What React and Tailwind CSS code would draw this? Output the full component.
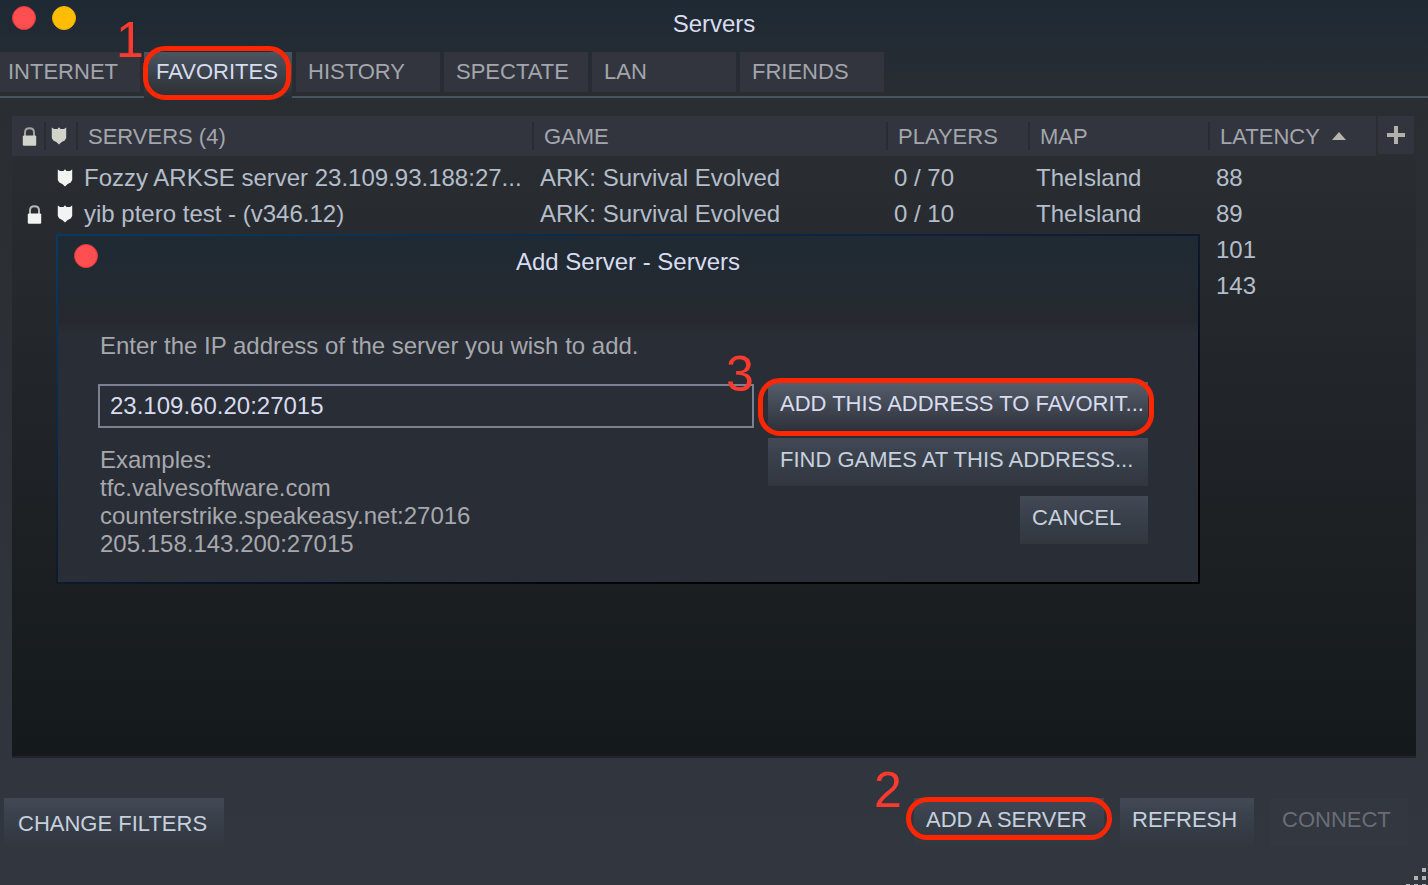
import { useState } from 'react';

const tabs = ['HISTORY', 'SPECTATE', 'LAN', 'FRIENDS'];

const servers = [
  { locked: false, secure: true, name: 'Fozzy ARKSE server 23.109.93.188:27...', game: 'ARK: Survival Evolved', players: '0 / 70', map: 'TheIsland', latency: 88 },
  { locked: true, secure: true, name: 'yib ptero test - (v346.12)', game: 'ARK: Survival Evolved', players: '0 / 10', map: 'TheIsland', latency: 89 },
  { latency: 101 },
  { latency: 143 },
];

const buttonBase = 'h-12 px-3 pb-1 text-left text-[22px] leading-7 whitespace-nowrap';
const buttonNormal = 'bg-linear-to-b from-[#434855] via-[#383f49] to-[#32363f] text-[#c6d0de]';

function LockIcon() {
  return (
    <svg width="15" height="19" viewBox="0 0 15 19" fill="none" aria-hidden="true">
      <path d="M3 10V5.500C3 2.500 5 1.200 7.500 1.200S12 2.500 12 5.500V10" stroke="currentColor" strokeWidth="2" opacity="0.7" />
      <path d="M1.500 8.500h12l0.700 1v8.500l-0.700 0.700h-12l-0.700-0.700v-8.500z" fill="currentColor" />
    </svg>
  );
}

function ShieldIcon() {
  return (
    <svg width="16" height="18" viewBox="0 0 16 18" fill="currentColor" aria-hidden="true">
      <path d="M0.800 0.500L3 2h3.500L8 0.300 9.500 2H13l2.200-1.500V11l-1.500 2.500-3 1.500L8 17.500 5.300 15l-3-1.500L0.800 11z" />
    </svg>
  );
}

function Dot({ label, color }) {
  return <button type="button" aria-label={label} className={`size-6 rounded-full border ${color}`} />;
}

function HeadCell({ children }) {
  return (
    <th scope="col" className="relative bg-[#32353e] p-0 pl-3 text-left font-normal">
      <span className="absolute top-1.5 left-0 h-7 w-0.5 bg-[#292c34]" />
      {children}
    </th>
  );
}

function ServerTable() {
  return (
    <table className="w-full table-fixed border-collapse whitespace-nowrap">
      <colgroup>
        <col className="w-8" />
        <col className="w-8" />
        <col className="w-[456px]" />
        <col />
        <col className="w-[142px]" />
        <col className="w-[180px]" />
        <col className="w-[168px]" />
        <col className="w-10" />
      </colgroup>
      <thead className="text-[22px] text-[#a3a6ac]">
        <tr className="h-10">
          <th scope="col" aria-label="Password" className="bg-[#32353e] p-0 pl-2.5 text-[#d0d4ca]">
            <LockIcon />
          </th>
          <th scope="col" aria-label="Secure" className="relative bg-[#32353e] p-0 pl-[7px] text-[#d0d4ca]">
            <span className="absolute top-1.5 left-0 h-7 w-0.5 bg-[#292c34]" />
            <ShieldIcon />
          </th>
          <HeadCell>SERVERS (4)</HeadCell>
          <HeadCell>GAME</HeadCell>
          <HeadCell>PLAYERS</HeadCell>
          <HeadCell>MAP</HeadCell>
          <HeadCell>
            <span className="flex items-center gap-3">
              LATENCY
              <svg width="14" height="8" viewBox="0 0 14 8" fill="#b8b5ae" aria-hidden="true">
                <path d="M7 0l7 8H0z" />
              </svg>
            </span>
          </HeadCell>
          <th scope="col" className="p-0 pl-0.5 align-top">
            <button type="button" aria-label="Add column" className="flex h-[38px] w-9 items-center justify-center bg-[#32353e]">
              <svg width="18" height="18" viewBox="0 0 18 18" stroke="#b3b1ac" strokeWidth="4" aria-hidden="true">
                <path d="M9 0v18M0 9h18" />
              </svg>
            </button>
          </th>
        </tr>
      </thead>
      <tbody className="text-2xl/7 text-[#b4bdc9] before:block before:h-1 before:content-['']">
        {servers.map((server) => (
          <tr key={server.latency} className="h-9">
            <td className="p-0 pl-[15px] text-[#f2f4f3]">{server.locked && <LockIcon />}</td>
            <td className="p-0 pl-[13px] text-[#f2f4f3]">{server.secure && <ShieldIcon />}</td>
            <td className="p-0 pl-2">{server.name}</td>
            <td className="p-0 pl-2">{server.game}</td>
            <td className="p-0 pl-2">{server.players}</td>
            <td className="p-0 pl-2">{server.map}</td>
            <td className="p-0 pl-2">{server.latency}</td>
            <td className="p-0" />
          </tr>
        ))}
      </tbody>
    </table>
  );
}

function AddServerDialog() {
  const [address, setAddress] = useState('23.109.60.20:27015');

  return (
    <section
      role="dialog"
      aria-labelledby="dialog-title"
      className="absolute top-[118px] right-[216px] left-11 bg-linear-to-br from-[#0b3a60] via-[#0d1a2e] to-black p-0.5"
    >
      <div className="bg-[#292d35] bg-linear-to-b from-[#1f2a34] via-[#25292f] via-[84px] to-[#292d35] to-[100px] pb-6">
        <header className="grid h-24 grid-cols-[1fr_auto_1fr] items-start px-4 pt-2">
          <Dot label="Close dialog" color="border-[#e8383a] bg-[#ff4f50]" />
          <h2 id="dialog-title" className="mt-1 text-2xl/7 text-[#d8dcf0]">Add Server - Servers</h2>
        </header>
        <form className="pr-[50px] pl-10 text-2xl/7 text-[#a6a8ad]" onSubmit={(e) => e.preventDefault()}>
          <label htmlFor="address" className="block pl-0.5">Enter the IP address of the server you wish to add.</label>
          <div className="flex items-start gap-3.5 pt-[22px]">
            <div className="min-w-0 flex-1 pt-0.5">
              <input
                id="address"
                type="text"
                value={address}
                onChange={(e) => setAddress(e.target.value)}
                className="block h-11 w-full border-2 border-[#7b8193] bg-[#292d35] px-2.5 text-[#d8dcf0] outline-none"
              />
              <p className="pt-[18px] pl-0.5">
                Examples:
                <br />
                tfc.valvesoftware.com
                <br />
                counterstrike.speakeasy.net:27016
                <br />
                205.158.143.200:27015
              </p>
            </div>
            <div className="flex w-[380px] flex-col items-end gap-2.5">
              <div className="flex w-full flex-col gap-2">
                <div className="relative">
                  <button type="submit" className={`${buttonBase} w-full bg-linear-to-b from-[#565f6c] to-[#2f323b] text-[#d8dcf0]`}>
                    ADD THIS ADDRESS TO FAVORIT...
                  </button>
                  <span className="pointer-events-none absolute -top-1 -right-1.5 -bottom-1.5 -left-2.5 rounded-[22px] border-5 border-[#ff2600]" />
                  <span className="absolute -top-9 -left-[42px] text-[50px]/[56px] text-[#ff3b30]">3</span>
                </div>
                <button type="button" className={`${buttonBase} ${buttonNormal} w-full`}>
                  FIND GAMES AT THIS ADDRESS...
                </button>
              </div>
              <button type="button" className={`${buttonBase} ${buttonNormal} w-32`}>CANCEL</button>
            </div>
          </div>
        </form>
      </div>
    </section>
  );
}

export default function App() {
  return (
    <main className="relative flex min-h-screen flex-col bg-linear-to-b from-[#1e2934] via-[#2a2e32] via-[110px] to-[#32363f] font-['Liberation_Sans',Arial,sans-serif]">
      <header className="grid h-[52px] grid-cols-[1fr_auto_1fr] items-start px-3 pt-1.5">
        <div className="flex gap-4">
          <Dot label="Close" color="border-[#e8383a] bg-[#ff4f50]" />
          <Dot label="Minimize" color="border-[#f0b000] bg-[#ffbd00]" />
        </div>
        <h1 className="mt-1 text-2xl/7 text-[#d8dcf0]">Servers</h1>
      </header>

      <nav className="flex h-[46px] items-start gap-1 border-b-2 border-[#4a545e] text-[22px]/10 text-[#a3a6ac]">
        <button type="button" className="h-10 w-[140px] bg-[#32353e] pl-2 text-left">INTERNET</button>
        <div className="relative">
          <button type="button" className="block h-[46px] w-[148px] bg-linear-to-b from-[#4b5560] to-[#2b2e34] pb-1.5 pl-3 text-left text-[#d8dcf0]">
            FAVORITES
          </button>
          <span className="pointer-events-none absolute -top-1.5 right-px -bottom-0.5 -left-px rounded-[22px] border-5 border-[#ff2600]" />
          <span className="absolute -top-10 -left-7 text-[50px]/[56px] text-[#ff3b30]">1</span>
        </div>
        {tabs.map((tab) => (
          <button key={tab} type="button" className="h-10 w-36 bg-[#32353e] pl-3 text-left">{tab}</button>
        ))}
      </nav>

      <div className="relative mx-3 mt-[18px] min-h-[641px] flex-1 border-b-2 border-[#20232c] bg-linear-to-b from-[#2b2f34] to-[#14191b]">
        <ServerTable />
        <AddServerDialog />
      </div>

      <footer className="flex h-[127px] items-start justify-between pt-10 pr-5 pl-1">
        <button type="button" className={`h-12 w-[220px] pt-1 pl-3.5 text-left text-[22px] leading-7 ${buttonNormal}`}>
          CHANGE FILTERS
        </button>
        <div className="flex gap-4">
          <div className="relative">
            <button type="button" className={`${buttonBase} ${buttonNormal} w-[190px]`}>ADD A SERVER</button>
            <span className="pointer-events-none absolute -inset-x-2 -top-px bottom-1.5 rounded-[22px] border-5 border-[#ff2600]" />
            <span className="absolute -top-9 -left-10 text-[50px]/[56px] text-[#ff3b30]">2</span>
          </div>
          <button type="button" className={`${buttonBase} ${buttonNormal} w-[134px]`}>REFRESH</button>
          <button type="button" disabled className={`${buttonBase} w-[138px] bg-[#33373f] text-[#6a6d76]`}>CONNECT</button>
        </div>
      </footer>

      <svg className="absolute right-0 bottom-0" width="24" height="18" viewBox="0 0 24 18" fill="#b3b3b1" aria-hidden="true">
        <path d="M18 1h4v4h-4zM10 9h4v4h-4zM18 9h4v4h-4zM2 17h4v1H2zM10 17h4v1h-4zM18 17h4v1h-4z" />
      </svg>
    </main>
  );
}
